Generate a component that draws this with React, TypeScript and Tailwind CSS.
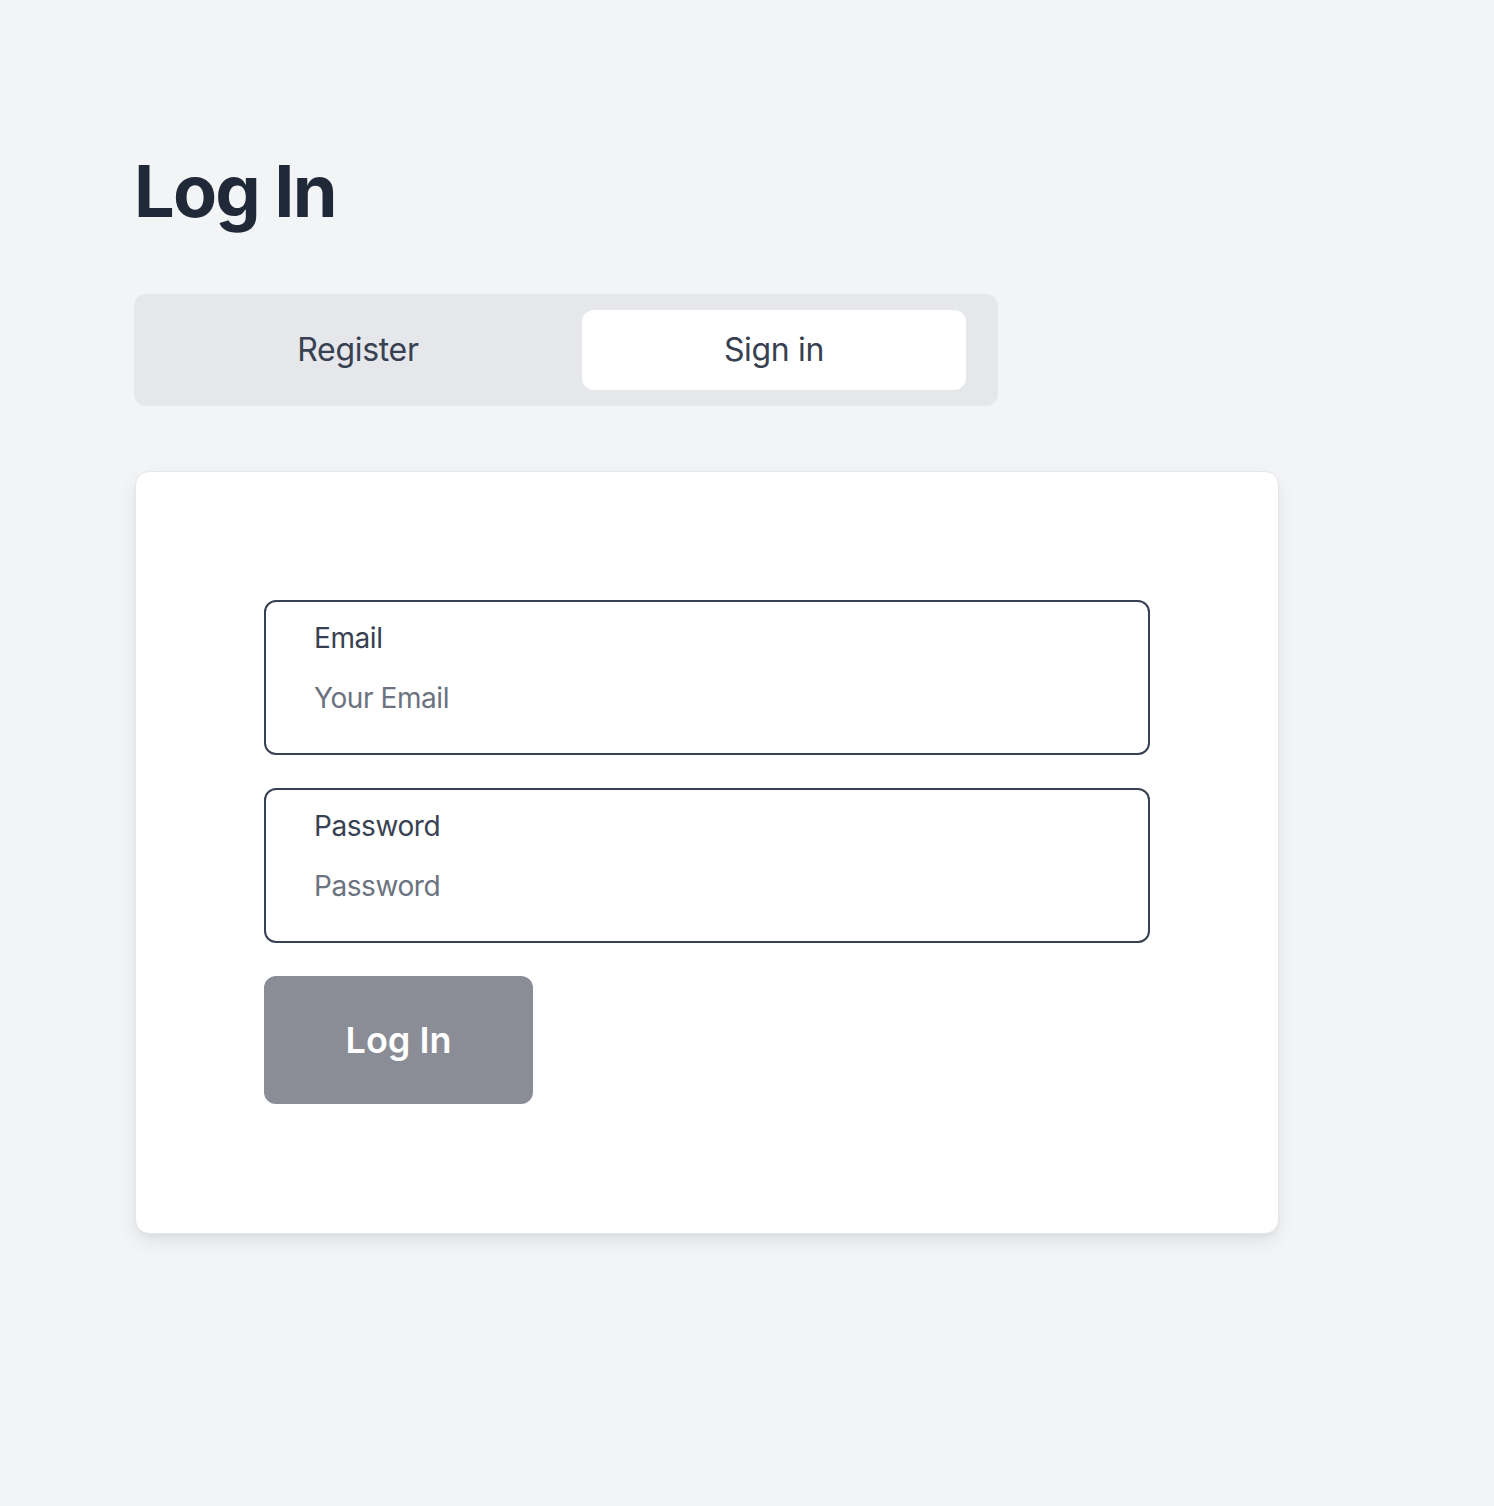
export default function App() {
  return (
    <div
      className="min-h-screen bg-[#f3f4f6] px-[135px] pt-[155px]"
      style={{ fontFamily: 'Inter, "Noto Sans", sans-serif' }}
    >
      {/* Heading */}
      <h1 className="text-[72px] leading-none font-bold tracking-[-0.025em] text-[#1f2937] -ml-[1px]">Log In</h1>

      {/* Tabs */}
      <div className="mt-[67px] -ml-[1px] w-[864px] h-[112px] bg-[#e5e7eb] rounded-[12px] p-4 flex gap-4">
        <button className="w-[416px] h-[80px] rounded-[12px] text-[32px] tracking-[-0.01em] text-[#374151]">
          Register
        </button>
        <button className="w-[384px] h-[80px] rounded-[12px] bg-white text-[32px] tracking-[-0.01em] text-[#374151]">
          Sign in
        </button>
      </div>

      {/* Card */}
      <div className="mt-[65px] w-[1144px] h-[763px] bg-white border border-[#e5e7eb] rounded-[14px] shadow-[0_8px_20px_-2px_rgba(0,0,0,0.09),0_3px_6px_-3px_rgba(0,0,0,0.08)] pt-[128px] pl-[128px]">
        <div className="w-[886px] flex flex-col gap-[33px]">
          <div className="border-2 border-[#374151] rounded-[12px] pl-[48px] pt-4 pb-[35px]">
            <label className="block text-[28px] leading-[40px] tracking-[-0.015em] text-[#374151]">Email</label>
            <input
              type="email"
              placeholder="Your Email"
              className="mt-5 block w-full h-[40px] text-[28px] leading-[40px] tracking-[-0.015em] outline-none placeholder:text-[#6b7280]"
            />
          </div>
          <div className="border-2 border-[#374151] rounded-[12px] pl-[48px] pt-4 pb-[35px]">
            <label className="block text-[28px] leading-[40px] tracking-[-0.015em] text-[#374151]">Password</label>
            <input
              type="password"
              placeholder="Password"
              className="mt-5 block w-full h-[40px] text-[28px] leading-[40px] tracking-[-0.015em] outline-none placeholder:text-[#6b7280]"
            />
          </div>
        </div>
        <button className="mt-[33px] w-[269px] h-[128px] rounded-[12px] bg-[#8a8d96] text-white text-[36px] font-semibold">
          Log In
        </button>
      </div>
    </div>
  );
}
